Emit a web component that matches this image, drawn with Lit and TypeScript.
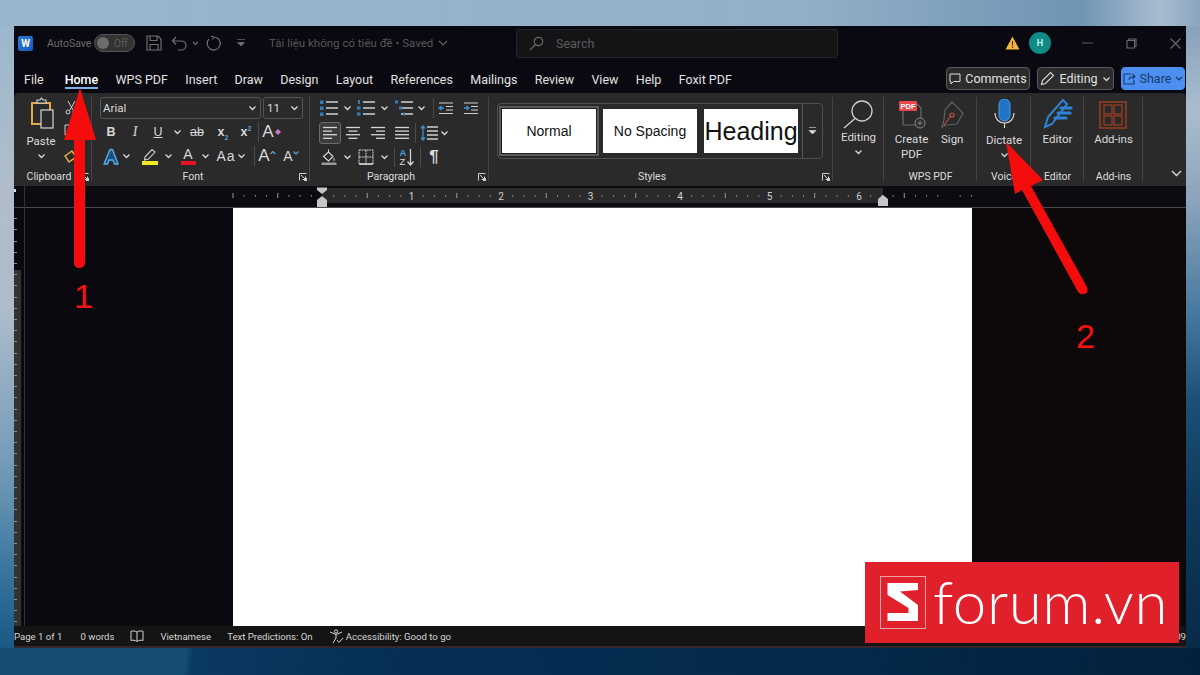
import { LitElement, html, css, svg } from 'lit';
import { customElement } from 'lit/decorators.js';

type Tool = { w: number; c: unknown };

const chev = svg`<path d="M-3 -1.5 L0 1.5 L3 -1.5" fill="none" stroke="#d8d8d8" stroke-width="1.3"/>`;
const icon = (w: number, h: number, body: unknown) =>
  html`<svg width=${w} height=${h} viewBox="0 0 ${w} ${h}">${body}</svg>`;
const chevron = () => icon(9, 6, svg`<g transform="translate(4.5 3)">${chev}</g>`);

const listIcon = (kind: number) =>
  icon(20, 18, svg`
    <g stroke="#cfcfcf" stroke-width="1.3">
      <path d="M7 3H19M7 9H19M7 15H19"/>
    </g>
    <g fill="#2f7fc1">
      ${kind === 0 ? svg`<rect x="1" y="1.5" width="3.5" height="3.5"/><rect x="1" y="7.5" width="3.5" height="3.5"/><rect x="1" y="13.5" width="3.5" height="3.5"/>` : ''}
      ${kind === 1 ? svg`<rect x="2" y="1" width="2" height="4"/><rect x="1" y="7.5" width="3.5" height="3"/><rect x="1" y="13.5" width="3.5" height="3"/>` : ''}
      ${kind === 2 ? svg`<rect x="1" y="1.5" width="3" height="3"/><rect x="5" y="7.5" width="3" height="3"/><rect x="9" y="13.5" width="2" height="3"/>` : ''}
    </g>`);

const alignIcon = (rows: [number, number][]) =>
  icon(16, 14, svg`<g stroke="#d6d6d6" stroke-width="1.3">
    ${rows.map(([a, b], i) => svg`<path d="M${a} ${1.5 + i * 3.6}H${b}"/>`)}
  </g>`);

const indentIcon = (right: boolean) =>
  icon(16, 14, svg`<path d="M1 2H15M8 5.5H15M8 9H15M1 12.5H15" stroke="#cfcfcf" stroke-width="1.2"/>
    <path d=${right ? 'M1 7H5M3.5 5L6 7L3.5 9' : 'M6 7H2M3.5 5L1 7L3.5 9'} stroke="#3d8fd0" stroke-width="1.3" fill="none"/>`);

const sep = () => html`<span class="vr"></span>`;
const gap = (w: number): Tool => ({ w, c: '' });

const font1: Tool[] = [
  { w: 22, c: html`<b class="g">B</b>` },
  { w: 26, c: html`<i class="g serif">I</i>` },
  { w: 20, c: html`<u class="g">U</u>` },
  { w: 18, c: chevron() },
  { w: 22, c: html`<span class="g strike">ab</span>` },
  { w: 30, c: html`<span class="g bold">x<sub>2</sub></span>` },
  { w: 16, c: html`<span class="g bold">x<sup>2</sup></span>` },
  { w: 8, c: sep() },
  { w: 20, c: html`<span class="g grow">A</span>${icon(8, 8, svg`<path d="M1 4L4 1L7 4L4 7Z" fill="#c879c8"/>`)}` },
];

const font2: Tool[] = [
  { w: 22, c: icon(18, 17, svg`<path d="M2 16L8 1.5H10.5L16 16H12.5L11 12H7L5.5 16Z" fill="#1c4f80" stroke="#59aee6" stroke-width="1.4" stroke-linejoin="round"/>`) },
  { w: 9, c: chevron() },
  gap(6),
  { w: 26, c: icon(18, 18, svg`<path d="M4 10L11 2.5L14 5L7.5 12L3.5 13Z" fill="none" stroke="#d0d0d0" stroke-width="1.1"/><rect x="1" y="14" width="16" height="4" fill="#f0e922"/>`) },
  { w: 10, c: chevron() },
  gap(2),
  { w: 26, c: html`<span class="fcolor"><span class="g">A</span><i></i></span>` },
  { w: 8, c: chevron() },
  gap(5),
  { w: 24, c: html`<span class="g aa">Aa</span>` },
  { w: 7, c: chevron() },
  gap(7),
  { w: 4, c: sep() },
  { w: 22, c: html`<span class="g grow">A</span>${icon(6, 12, svg`<path d="M.5 4L3 1.5L5.5 4" fill="none" stroke="#5ba7dc" stroke-width="1.1"/>`)}` },
  gap(2),
  { w: 22, c: html`<span class="g shrink">A</span>${icon(6, 12, svg`<path d="M.5 1.5L3 4L5.5 1.5" fill="none" stroke="#5ba7dc" stroke-width="1.1"/>`)}` },
];

const para1: Tool[] = [
  { w: 20, c: listIcon(0) },
  { w: 16, c: chevron() },
  { w: 22, c: listIcon(1) },
  { w: 14, c: chevron() },
  { w: 26, c: listIcon(2) },
  { w: 8, c: chevron() },
  { w: 16, c: sep() },
  { w: 10, c: indentIcon(false) },
  { w: 40, c: indentIcon(true) },
];

const para2: Tool[] = [
  { w: 22, c: html`<span class="active">${alignIcon([[1, 15], [1, 10], [1, 15], [1, 10]])}</span>` },
  { w: 24, c: alignIcon([[1, 15], [3.5, 12.5], [1, 15], [3.5, 12.5]]) },
  { w: 26, c: alignIcon([[1, 15], [6, 15], [1, 15], [6, 15]]) },
  { w: 22, c: alignIcon([[1, 15], [1, 15], [1, 15], [1, 15]]) },
  { w: 4, c: sep() },
  { w: 24, c: icon(18, 16, svg`<path d="M7 2H18M7 6H18M7 10H18M7 14H18" stroke="#cfcfcf" stroke-width="1.3"/><path d="M3 1V15M1 3.5L3 1L5 3.5M1 12.5L3 15L5 12.5" fill="none" stroke="#3d8fd0" stroke-width="1.3"/>`) },
  { w: 6, c: chevron() },
];

const para3: Tool[] = [
  { w: 20, c: icon(16, 16, svg`<path d="M2.5 7.5L7.5 3L12 7.5L7.5 12Z" fill="#2a2a2a" stroke="#d8d8d8" stroke-width="1.1"/><path d="M7.5 3V.5M13 9V12" stroke="#d8d8d8"/><rect x="0.5" y="13.5" width="15" height="2.5" fill="#9a9a9a"/>`) },
  { w: 16, c: chevron() },
  { w: 22, c: icon(16, 16, svg`<path d="M1 1H15V15H1ZM8 1V15M1 8H15" fill="none" stroke="#cfcfcf" stroke-width="1" stroke-dasharray="2 .6"/><path d="M1 15H15" stroke="#e0e0e0" stroke-width="1.4"/>`) },
  { w: 14, c: chevron() },
  { w: 6, c: sep() },
  { w: 20, c: html`<span class="sort"><span class="az"><em>A</em><span>Z</span></span>${icon(7, 18, svg`<path d="M3.5 1V17M.5 13.5L3.5 17L6.5 13.5" fill="none" stroke="#d8d8d8" stroke-width="1.2"/>`)}</span>` },
  { w: 6, c: sep() },
  { w: 22, c: html`<span class="g pilcrow">¶</span>` },
];

const launcher = () => icon(8, 8, svg`<path d="M.5 7.5V.5H7.5" fill="none" stroke="#cfcfcf"/><path d="M2 2L6.5 6.5M3.5 6.5H6.5V3.5" fill="none" stroke="#cfcfcf"/><rect x="5" y="5" width="3" height="3" fill="#cfcfcf"/>`);

const tabs = ['File', 'Home', 'WPS PDF', 'Insert', 'Draw', 'Design', 'Layout', 'References', 'Mailings', 'Review', 'View', 'Help', 'Foxit PDF'];

@customElement('ruler-bar')
export class RulerBar extends LitElement {
  static styles = css`
    :host { display: block; height: 22px; background: #0d0a11; }
    svg { display: block; }
  `;

  render() {
    const ticks = [];
    const origin = 322 - 14;
    const inch = 89.5;
    for (let i = -10; i <= 58; i++) {
      const x = origin + (i * inch) / 8;
      if (x < 218 || x > 960) continue;
      if (i % 8 === 0 && i >= 0) continue;
      const half = i % 4 === 0;
      ticks.push(svg`<rect x=${x} y=${half ? 7 : 9} width="1" height=${half ? 5 : 1.5} fill="#9c9c9c"/>`);
    }
    const nums = [1, 2, 3, 4, 5, 6].map(
      (n) => svg`<text x=${origin + n * inch} y="13.5" text-anchor="middle" font-family="Roboto" font-size="10" fill="#d0d0d0">${n}</text>`,
    );
    return html`<svg width="1172" height="22">
      <rect x="0" y="21" width="1172" height="1" fill="#4a4a4a"/>
      <rect x="10" y="0" width="1" height="22" fill="#333"/>
      <rect x="0" y="3" width="2" height="3" fill="#ddd"/>
      <rect x=${origin} y="2" width="561" height="15" fill="#2a2a2a"/>
      ${ticks}${nums}
      <path d="M303 1.5H313V4L308 8L303 4Z" fill="#c6c6c6"/>
      <path d="M308 10L313 14V21H303V14Z" fill="#c6c6c6"/>
      <path d="M869 14L874 10L879 14V21H869Z" transform="translate(-5 -1)" fill="#c6c6c6"/>
    </svg>`;
  }
}

@customElement('app-root')
export class AppRoot extends LitElement {
  static styles = css`
    :host {
      display: block;
      width: 1200px;
      height: 675px;
      overflow: hidden;
      font-family: Roboto, 'Open Sans', sans-serif;
    }
    svg { display: block; flex: none; }
    .desktop {
      position: relative;
      width: 1200px;
      height: 675px;
      padding: 26px 14px 0;
      box-sizing: border-box;
      background-color: #0a3050;
      background-repeat: no-repeat;
      background-image:
        linear-gradient(90deg, #9ab6cd 0, #94b0c8 800px, #6f94b4 1080px, #a8bccd 1160px, #8aa6bf 100%),
        linear-gradient(97deg, #164c72 0, #174d73 185px, #0b3a60 192px, #052f54 400px, #042a4c 800px, #03213d 100%),
        linear-gradient(180deg, #9ab6cd 0, #b0bdc9 190px, #aebccb 310px, #6d97b5 480px, #2a6a96 600px, #1a5885 648px),
        linear-gradient(180deg, #7e9ab5 0, #aabdce 110px, #8ba4bb 200px, #4f7ea3 300px, #1c5076 400px, #0f3a5c 500px, #082a49 648px);
      background-size: 100% 26px, 100% 27px, 14px 100%, 14px 100%;
      background-position: 0 0, 0 100%, 0 0, 100% 0;
    }
    .window {
      height: 622px;
      display: flex;
      flex-direction: column;
      background: #0a0810;
      color: #e8e8e8;
    }

    .title { height: 34px; display: flex; align-items: center; padding-left: 4px; font-size: 10.5px; color: #6d6d6d; }
    .word { width: 15px; height: 15px; background: linear-gradient(135deg, #2b7cd3, #185abd); border-radius: 2px; color: #fff; font-size: 10px; font-weight: 700; display: flex; align-items: center; justify-content: center; margin-right: 14px; }
    .autosave { width: 47px; }
    .toggle { width: 41px; height: 18px; border: 1px solid #555; background: #333; border-radius: 10px; box-sizing: border-box; display: flex; align-items: center; gap: 5px; padding-left: 2px; margin-right: 11px; color: #5f5f5f; font-size: 10px; }
    .knob { width: 12px; height: 12px; border-radius: 50%; background: #6b6b6b; }
    .t-icons { display: flex; align-items: center; margin-right: 23px; }
    .t-icons .save { margin-right: 9px; }
    .t-icons .undo { margin-right: 4px; }
    .t-icons .redo { margin: 0 15px 0 6px; }
    .doc-name { width: 247px; display: flex; align-items: center; gap: 5px; font-size: 11.5px; color: #585858; }
    .search { width: 322px; height: 29px; background: #141316; border: 1px solid #252428; border-radius: 3px; box-sizing: border-box; display: flex; align-items: center; gap: 12px; padding-left: 12px; font-size: 12.5px; color: #5c5c5c; margin-right: 167px; }
    .warn { margin-right: 9px; }
    .avatar { width: 22px; height: 22px; border-radius: 50%; background: #0f8a86; color: #cfe; font-size: 9px; font-weight: 600; display: flex; align-items: center; justify-content: center; margin-right: 31px; }
    .win { display: flex; align-items: center; gap: 33px; }

    .tabs { height: 33px; display: flex; align-items: center; padding: 6px 0 0 10px; box-sizing: border-box; font-size: 12.5px; }
    .tab { position: relative; margin-right: 17.3px; color: #e2e2e2; white-space: nowrap; }
    .tab:first-child { margin-right: 21px; }
    .tab.on { font-weight: 500; color: #fff; }
    .tab.on::after { content: ''; position: absolute; left: 0; right: 0; bottom: -2px; height: 2px; background: #7fb2ea; }
    .right { margin: -2px 0 0 auto; display: flex; gap: 7px; padding-right: 1px; }
    .btn { height: 23px; box-sizing: border-box; border: 1px solid #5a5a5a; background: #2c2c2c; border-radius: 4px; display: flex; align-items: center; justify-content: center; gap: 4px; font-size: 12.5px; color: #e0e0e0; }
    .btn.comments { width: 84px; }
    .btn.editing { width: 77px; }
    .btn.share { width: 64px; background: #4d8ff0; border-color: #4d8ff0; color: #143a6b; }

    .ribbon { height: 93px; display: flex; background: #2a2a2a; border-radius: 5px 5px 0 0; font-size: 11.5px; color: #dcdcdc; }
    .group { position: relative; display: flex; flex-direction: column; align-items: center; box-sizing: border-box; margin: 4px 0 1px; }
    .group::after { content: ''; position: absolute; right: 0; top: 0; bottom: 4px; width: 1px; background: #454545; }
    .group.clip { width: 78px; align-items: flex-start; padding-left: 10px; }
    .group.font { width: 218px; align-items: flex-start; padding-left: 8px; }
    .group.para { width: 179px; align-items: flex-start; padding-left: 9px; }
    .group.styles { width: 344px; align-items: flex-start; padding-left: 8px; }
    .group.editing { width: 51px; }
    .group.wps { width: 93px; }
    .group.voice { width: 54px; }
    .group.editor { width: 53px; }
    .group.addins { width: 59px; }
    .body { flex: 1; display: flex; flex-direction: column; min-height: 0; }
    .glabel { align-self: stretch; text-align: center; height: 16px; line-height: 15px; font-size: 10.5px; color: #dcdcdc; white-space: nowrap; }
    .clip .glabel { align-self: flex-start; width: 48px; margin-left: 1px; }
    .font .glabel { align-self: flex-start; width: 186px; }
    .para .glabel { align-self: flex-start; width: 144px; }
    .styles .glabel { align-self: flex-start; width: 310px; }
    .launch { position: absolute; right: 3px; bottom: 4px; }

    .clip-body { flex-direction: row; gap: 6px; }
    .paste { display: flex; flex-direction: column; align-items: center; width: 34px; }
    .paste span { margin: 5px 0 5px; line-height: 14px; }
    .clip-tools { display: flex; flex-direction: column; gap: 9px; padding-top: 3px; }

    .combos { display: flex; gap: 2px; margin-bottom: 1px; }
    .combo { height: 22px; border: 1px solid #555; border-radius: 3px; box-sizing: border-box; display: flex; align-items: center; justify-content: space-between; padding: 0 3px 0 2px; font-size: 11.5px; }
    .combo.name { width: 161px; }
    .combo.size { width: 40px; padding-left: 3px; }
    .row { display: flex; align-items: center; height: 24px; flex: none; }
    .para-top { height: 21px; margin-bottom: 3px; }
    .slot { display: flex; align-items: center; justify-content: center; flex: none; height: 100%; }
    .g { font-size: 12.5px; font-family: 'Liberation Sans', sans-serif; color: #d8d8d8; }
    .g sub, .g sup { font-size: 7px; color: #5ba7dc; line-height: 0; }
    .serif { font-family: 'Liberation Serif', serif; font-size: 14px; }
    .bold { font-weight: 700; }
    .strike { text-decoration: line-through; }
    .aa { font-size: 14px; letter-spacing: 1px; }
    .grow { font-size: 17px; line-height: 18px; }
    .shrink { font-size: 14px; line-height: 18px; }
    .pilcrow { font-size: 17px; font-weight: 700; }
    .fcolor { display: flex; flex-direction: column; align-items: center; width: 16px; }
    .fcolor .g { font-size: 14px; line-height: 14px; }
    .fcolor i { display: block; width: 15px; height: 3.5px; background: #e81224; }
    .sort { display: flex; align-items: center; gap: 1px; }
    .az { display: flex; flex-direction: column; font: 9.5px/9px 'Liberation Sans', sans-serif; color: #d8d8d8; }
    .az em { font-style: normal; font-weight: 700; color: #4b9ad8; }
    .vr { display: block; width: 1px; height: 20px; background: #4b4b4b; flex: none; }
    .active { display: flex; align-items: center; justify-content: center; width: 22px; height: 22px; background: #3c3c3c; border: 1px solid #6b6b6b; border-radius: 3px; box-sizing: border-box; }

    .gallery { width: 326px; height: 56px; margin-top: 6px; border: 1px solid #505050; border-radius: 4px; box-sizing: border-box; display: flex; align-items: center; padding-left: 4px; gap: 7px; }
    .style { width: 94px; height: 44px; background: #fff; color: #111; font-family: 'Liberation Sans', sans-serif; font-size: 14px; display: flex; align-items: center; justify-content: center; flex: none; }
    .style.sel { outline: 1px solid #1f1f1f; box-shadow: 0 0 0 3px #5a5a5a; }
    .style.big { font-size: 25px; white-space: nowrap; }
    .more { align-self: stretch; margin-left: -3px; flex: 1; border-left: 1px solid #555; display: flex; align-items: center; justify-content: center; }

    .big-tool { display: flex; flex-direction: column; align-items: center; text-align: center; line-height: 14.5px; padding-top: 2px; white-space: nowrap; }
    .big-tool svg { margin-bottom: 3px; }
    .big-tool.tight svg { margin-bottom: 1px; }
    .big-tool.mic svg { margin-bottom: 4px; }
    .big-tool.grid { padding-top: 4px; }
    .big-tool .under { margin-top: 4px; }
    .tools { display: flex; gap: 10px; }
    .ribbon-end { flex: 1; position: relative; }
    .ribbon-end svg { position: absolute; right: 4px; bottom: 9px; }

    .doc { flex: 1; min-height: 0; display: flex; background: linear-gradient(90deg, #0b0810, #0b0810 60%, #0e0808); }
    .vruler {
      width: 11px;
      box-sizing: border-box;
      border-right: 1px solid #333;
      background-repeat: no-repeat;
      background-image:
        repeating-linear-gradient(180deg, transparent 0 10.2px, #8a8a8a 10.2px 11.2px),
        linear-gradient(#333, #333);
      background-size: 3px 100%, 7px 100%;
      background-position: 0 0, 0 62px;
    }
    .page { width: 739px; background: #fff; margin-left: 208px; }

    .status { height: 22px; background: #141414; border-bottom: 2px solid #34282c; box-sizing: border-box; display: flex; align-items: center; font-size: 9.6px; color: #d4d4d4; white-space: nowrap; }
    .status > span { margin-right: 16px; }
    .status .first { margin-right: 18px; }
    .status .a11y { display: flex; align-items: center; gap: 2px; }
    .status .end { margin: 0 0 0 auto; }

    .overlay { position: absolute; left: 0; top: 0; pointer-events: none; }
    .num { position: absolute; color: #f51212; font-family: 'Liberation Sans', sans-serif; font-size: 34px; line-height: 1; }
    .n1 { left: 74px; top: 279px; }
    .n2 { left: 1076px; top: 319px; }

    .brand { position: absolute; left: 865px; top: 562px; width: 314px; height: 81px; background: #e0202b; display: flex; align-items: center; padding-left: 15px; box-sizing: border-box; gap: 7px; }
    .brand span { color: #fff; font-family: Lato, 'Open Sans', sans-serif; font-weight: 300; font-size: 60px; letter-spacing: .6px; line-height: 1; margin-top: -4px; }
  `;

  private slots(list: Tool[]) {
    return list.map((t) => html`<span class="slot" style="width:${t.w}px">${t.c}</span>`);
  }

  render() {
    return html`
      <div class="desktop">
        <div class="window">
          <div class="title">
            <div class="word">W</div>
            <span class="autosave">AutoSave</span>
            <div class="toggle"><i class="knob"></i>Off</div>
            <div class="t-icons">
              <span class="save">${icon(16, 16, svg`<path d="M1 1H12L15 4V15H1ZM4 1V5.5H11V1M4 15V9.5H12V15" fill="none" stroke="#6e6e6e" stroke-width="1.2"/>`)}</span>
              <span class="undo">${icon(17, 15, svg`<path d="M5 1L1.5 5L5 8.5M2 5H10C13 5 15 7 15 9.5C15 12 13 14 10 14H7" fill="none" stroke="#6e6e6e" stroke-width="1.2"/>`)}</span>
              ${icon(7, 5, svg`<path d="M1 1L3.5 3.5L6 1" fill="none" stroke="#6e6e6e" stroke-width="1.1"/>`)}
              <span class="redo">${icon(16, 16, svg`<path d="M9.5 1.5A6.5 6.5 0 1 1 4.5 3.5M9.5 1.5L6.5 .5M9.5 1.5L8 4" transform="translate(-.5 .5)" fill="none" stroke="#6e6e6e" stroke-width="1.2"/>`)}</span>
              ${icon(10, 8, svg`<path d="M1 .5H9M1.5 3.5H8.5L5 7Z" fill="#6e6e6e" stroke="#6e6e6e" stroke-width=".7"/>`)}
            </div>
            <div class="doc-name">Tài liệu không có tiêu đề • Saved ${icon(10, 6, svg`<path d="M1 1L5 5L9 1" fill="none" stroke="#666" stroke-width="1.1"/>`)}</div>
            <div class="search">
              ${icon(15, 15, svg`<circle cx="9.5" cy="5.5" r="4.2" fill="none" stroke="#666" stroke-width="1.2"/><path d="M6.5 8.5L1 14" stroke="#666" stroke-width="1.2"/>`)}
              Search
            </div>
            <div class="warn">${icon(15, 14, svg`<path d="M7.5 .5L14.5 13.5H.5Z" fill="#f2b23e"/><path d="M7.5 5V9.5M7.5 10.6V12" stroke="#4a3410" stroke-width="1.2"/>`)}</div>
            <div class="avatar">H</div>
            <div class="win">
              ${icon(11, 2, svg`<path d="M0 1H11" stroke="#555" stroke-width="1.1"/>`)}
              ${icon(11, 11, svg`<path d="M2.5 2.5V1H10V8.5H8.5M1 2.5H8.5V10H1Z" fill="none" stroke="#6b6b6b" stroke-width="1.1"/>`)}
              ${icon(11, 11, svg`<path d="M.5 .5L10.5 10.5M10.5 .5L.5 10.5" stroke="#6b6b6b" stroke-width="1.1"/>`)}
            </div>
          </div>

          <div class="tabs">
            ${tabs.map((t) => html`<span class="tab ${t === 'Home' ? 'on' : ''}">${t}</span>`)}
            <div class="right">
              <div class="btn comments">
                ${icon(12, 12, svg`<path d="M1 1H11V8.5H4.5L2 11V8.5H1Z" fill="none" stroke="#ddd"/>`)} Comments
              </div>
              <div class="btn editing">
                ${icon(15, 15, svg`<path d="M1.5 13.5L2.5 9.5L10.5 1.5L13.5 4.5L5.5 12.5Z" fill="none" stroke="#ddd" stroke-width="1.1"/>`)} Editing ${chevron()}
              </div>
              <div class="btn share">
                ${icon(13, 12, svg`<path d="M8 1H1V11H11V7M6 7C6 4.5 8 3.5 12 3.5M9.5 1L12 3.5L9.5 6" fill="none" stroke="#143a6b" stroke-width="1.1"/>`)} Share ${icon(8, 5, svg`<path d="M1 1L4 4L7 1" fill="none" stroke="#143a6b" stroke-width="1.2"/>`)}
              </div>
            </div>
          </div>

          <div class="ribbon">
            <div class="group clip">
              <div class="body clip-body">
                <div class="paste">
                  ${icon(26, 32, svg`
                    <path d="M4 6H22V27H4Z" fill="none" stroke="#e2a84a" stroke-width="2"/>
                    <path d="M9 6V3H12L13.5 1L15 3H18V6Z" fill="#2a2a2a" stroke="#d8d8d8" stroke-width="1.1"/>
                    <rect x="13" y="13" width="12" height="18" fill="#2a2a2a" stroke="#d8d8d8" stroke-width="1.2"/>`)}
                  <span>Paste</span>
                  ${chevron()}
                </div>
                <div class="clip-tools">
                  ${icon(14, 15, svg`<path d="M4 1L9 10M11 1L6 10" stroke="#cfcfcf" fill="none"/><circle cx="4" cy="12" r="2" fill="none" stroke="#cfcfcf"/><circle cx="11" cy="12" r="2" fill="none" stroke="#cfcfcf"/>`)}
                  ${icon(14, 15, svg`<path d="M1 1H9V11H1Z" fill="none" stroke="#cfcfcf"/><path d="M5 4H13V14H5Z" fill="#2a2a2a" stroke="#cfcfcf"/>`)}
                  ${icon(14, 15, svg`<path d="M1 8L8 3L12 9L5 14Z" fill="none" stroke="#e8b83c" stroke-width="1.4"/>`)}
                </div>
              </div>
              <div class="glabel">Clipboard</div>
              <div class="launch">${launcher()}</div>
            </div>

            <div class="group font">
              <div class="body">
                <div class="combos">
                  <div class="combo name">Arial ${chevron()}</div>
                  <div class="combo size">11 ${chevron()}</div>
                </div>
                <div class="row">${this.slots(font1)}</div>
                <div class="row">${this.slots(font2)}</div>
              </div>
              <div class="glabel">Font</div>
              <div class="launch">${launcher()}</div>
            </div>

            <div class="group para">
              <div class="body">
                <div class="row para-top">${this.slots(para1)}</div>
                <div class="row">${this.slots(para2)}</div>
                <div class="row">${this.slots(para3)}</div>
              </div>
              <div class="glabel">Paragraph</div>
              <div class="launch">${launcher()}</div>
            </div>

            <div class="group styles">
              <div class="body">
                <div class="gallery">
                  <div class="style sel">Normal</div>
                  <div class="style">No Spacing</div>
                  <div class="style big">Heading</div>
                  <div class="more">${icon(9, 8, svg`<path d="M1 .5H8M1 3.5H8L4.5 7Z" fill="#ddd" stroke="#ddd" stroke-width=".6"/>`)}</div>
                </div>
              </div>
              <div class="glabel">Styles</div>
              <div class="launch">${launcher()}</div>
            </div>

            <div class="group editing">
              <div class="body">
                <div class="big-tool tight">
                  ${icon(34, 30, svg`<circle cx="20" cy="12" r="10" fill="none" stroke="#cfcfcf" stroke-width="1.3"/><path d="M13 19.5L2 29" stroke="#cfcfcf" stroke-width="1.3"/>`)}
                  Editing
                  <span class="under">${chevron()}</span>
                </div>
              </div>
            </div>

            <div class="group wps">
              <div class="body">
                <div class="tools">
                  <div class="big-tool">
                    ${icon(28, 30, svg`
                      <path d="M5 4H18L23 9V26H5Z" fill="none" stroke="#6a6a6a" stroke-width="1.2"/>
                      <rect x="1" y="2" width="18" height="10" rx="1" fill="#e8474c"/>
                      <text x="10" y="10" text-anchor="middle" font-family="Liberation Sans" font-size="7.5" font-weight="700" fill="#fff">PDF</text>
                      <circle cx="22" cy="24" r="5" fill="#2a2a2a" stroke="#8b8b8b"/><path d="M22 21.5V26.5M19.5 24H24.5" stroke="#8b8b8b"/>`)}
                    Create<br />PDF
                  </div>
                  <div class="big-tool">
                    ${icon(28, 30, svg`
                      <path d="M14 3L25 14L19 25L8 26L4 28L6 21L7 11Z" fill="none" stroke="#616161" stroke-width="1.2"/>
                      <path d="M6 26L13 17" stroke="#c0524a" stroke-width="1.2"/><circle cx="14" cy="16" r="2" fill="none" stroke="#c0524a" stroke-width="1.2"/>`)}
                    Sign
                  </div>
                </div>
              </div>
              <div class="glabel">WPS PDF</div>
            </div>

            <div class="group voice">
              <div class="body">
                <div class="big-tool mic">
                  ${icon(22, 30, svg`
                    <rect x="6" y="0" width="11" height="22" rx="5.5" fill="#1f74c6" stroke="#4da0e6"/>
                    <path d="M2 14C2 20 6 24 11.5 24C17 24 21 20 21 14M11.5 24V29" fill="none" stroke="#d8d8d8" stroke-width="1.2"/>`)}
                  Dictate
                  <span class="under">${chevron()}</span>
                </div>
              </div>
              <div class="glabel">Voice</div>
            </div>

            <div class="group editor">
              <div class="body">
                <div class="big-tool">
                  ${icon(30, 30, svg`
                    <path d="M2 28L5 18L20 1L24 5L9 25Z" fill="none" stroke="#2f83d6" stroke-width="2"/>
                    <path d="M18 9H28M15 14H27M12 19H23" stroke="#2f83d6" stroke-width="3.2" stroke-linecap="round"/>`)}
                  Editor
                </div>
              </div>
              <div class="glabel">Editor</div>
            </div>

            <div class="group addins">
              <div class="body">
                <div class="big-tool grid">
                  ${icon(28, 28, svg`
                    <rect x="1" y="1" width="26" height="26" fill="none" stroke="#b8431f" stroke-width="1.2"/>
                    <rect x="5" y="4" width="8" height="9" fill="none" stroke="#b8431f"/><rect x="15" y="4" width="8" height="9" fill="none" stroke="#b8431f"/>
                    <rect x="5" y="15" width="8" height="9" fill="none" stroke="#b8431f"/><rect x="15" y="15" width="8" height="9" fill="none" stroke="#b8431f"/>`)}
                  Add-ins
                </div>
              </div>
              <div class="glabel">Add-ins</div>
            </div>

            <div class="ribbon-end">
              ${icon(11, 7, svg`<path d="M1 1L5.5 5.5L10 1" fill="none" stroke="#e0e0e0" stroke-width="1.3"/>`)}
            </div>
          </div>

          <ruler-bar></ruler-bar>

          <div class="doc">
            <div class="vruler"></div>
            <div class="page"></div>
          </div>

          <div class="status">
            <span class="first">Page 1 of 1</span>
            <span>0 words</span>
            <span>${icon(14, 12, svg`<path d="M7 2C5 .8 3 .8 1 1.2V10.5C3 10 5 10 7 11.5C9 10 11 10 13 10.5V1.2C11 .8 9 .8 7 2ZM7 2V11" fill="none" stroke="#d4d4d4"/>`)}</span>
            <span>Vietnamese</span>
            <span>Text Predictions: On</span>
            <span class="a11y">
              ${icon(15, 15, svg`<circle cx="7" cy="2.5" r="1.6" fill="none" stroke="#d4d4d4"/><path d="M1 3L7 5.5L13 3M7 5.5V9L4 14M8 11L10 13.5L14 9" fill="none" stroke="#d4d4d4"/>`)}
              Accessibility: Good to go
            </span>
            <span class="end">09</span>
          </div>
        </div>

        <svg class="overlay" width="1200" height="675">
          <path d="M80 88L96 140H85V262Q85 268 79.5 268Q74 268 74 262V140H64Z" fill="#f50d0d"/>
          <path d="M1006 142L1043 180L1031 186L1087 287Q1089 293 1084 294Q1079 295 1077 290L1022 190L1015 194Z" fill="#f50d0d"/>
        </svg>
        <div class="num n1">1</div>
        <div class="num n2">2</div>

        <div class="brand">
          ${icon(46, 53, svg`
            <rect x=".5" y=".5" width="45" height="52" fill="none" stroke="#f2a0a4"/>
            <path d="M7.5 7H38V14L20 15.5L38 29V45H7.5V37H28.5V32L7.5 19Z" fill="#fff"/>`)}
          <span>forum.vn</span>
        </div>
      </div>
    `;
  }
}
